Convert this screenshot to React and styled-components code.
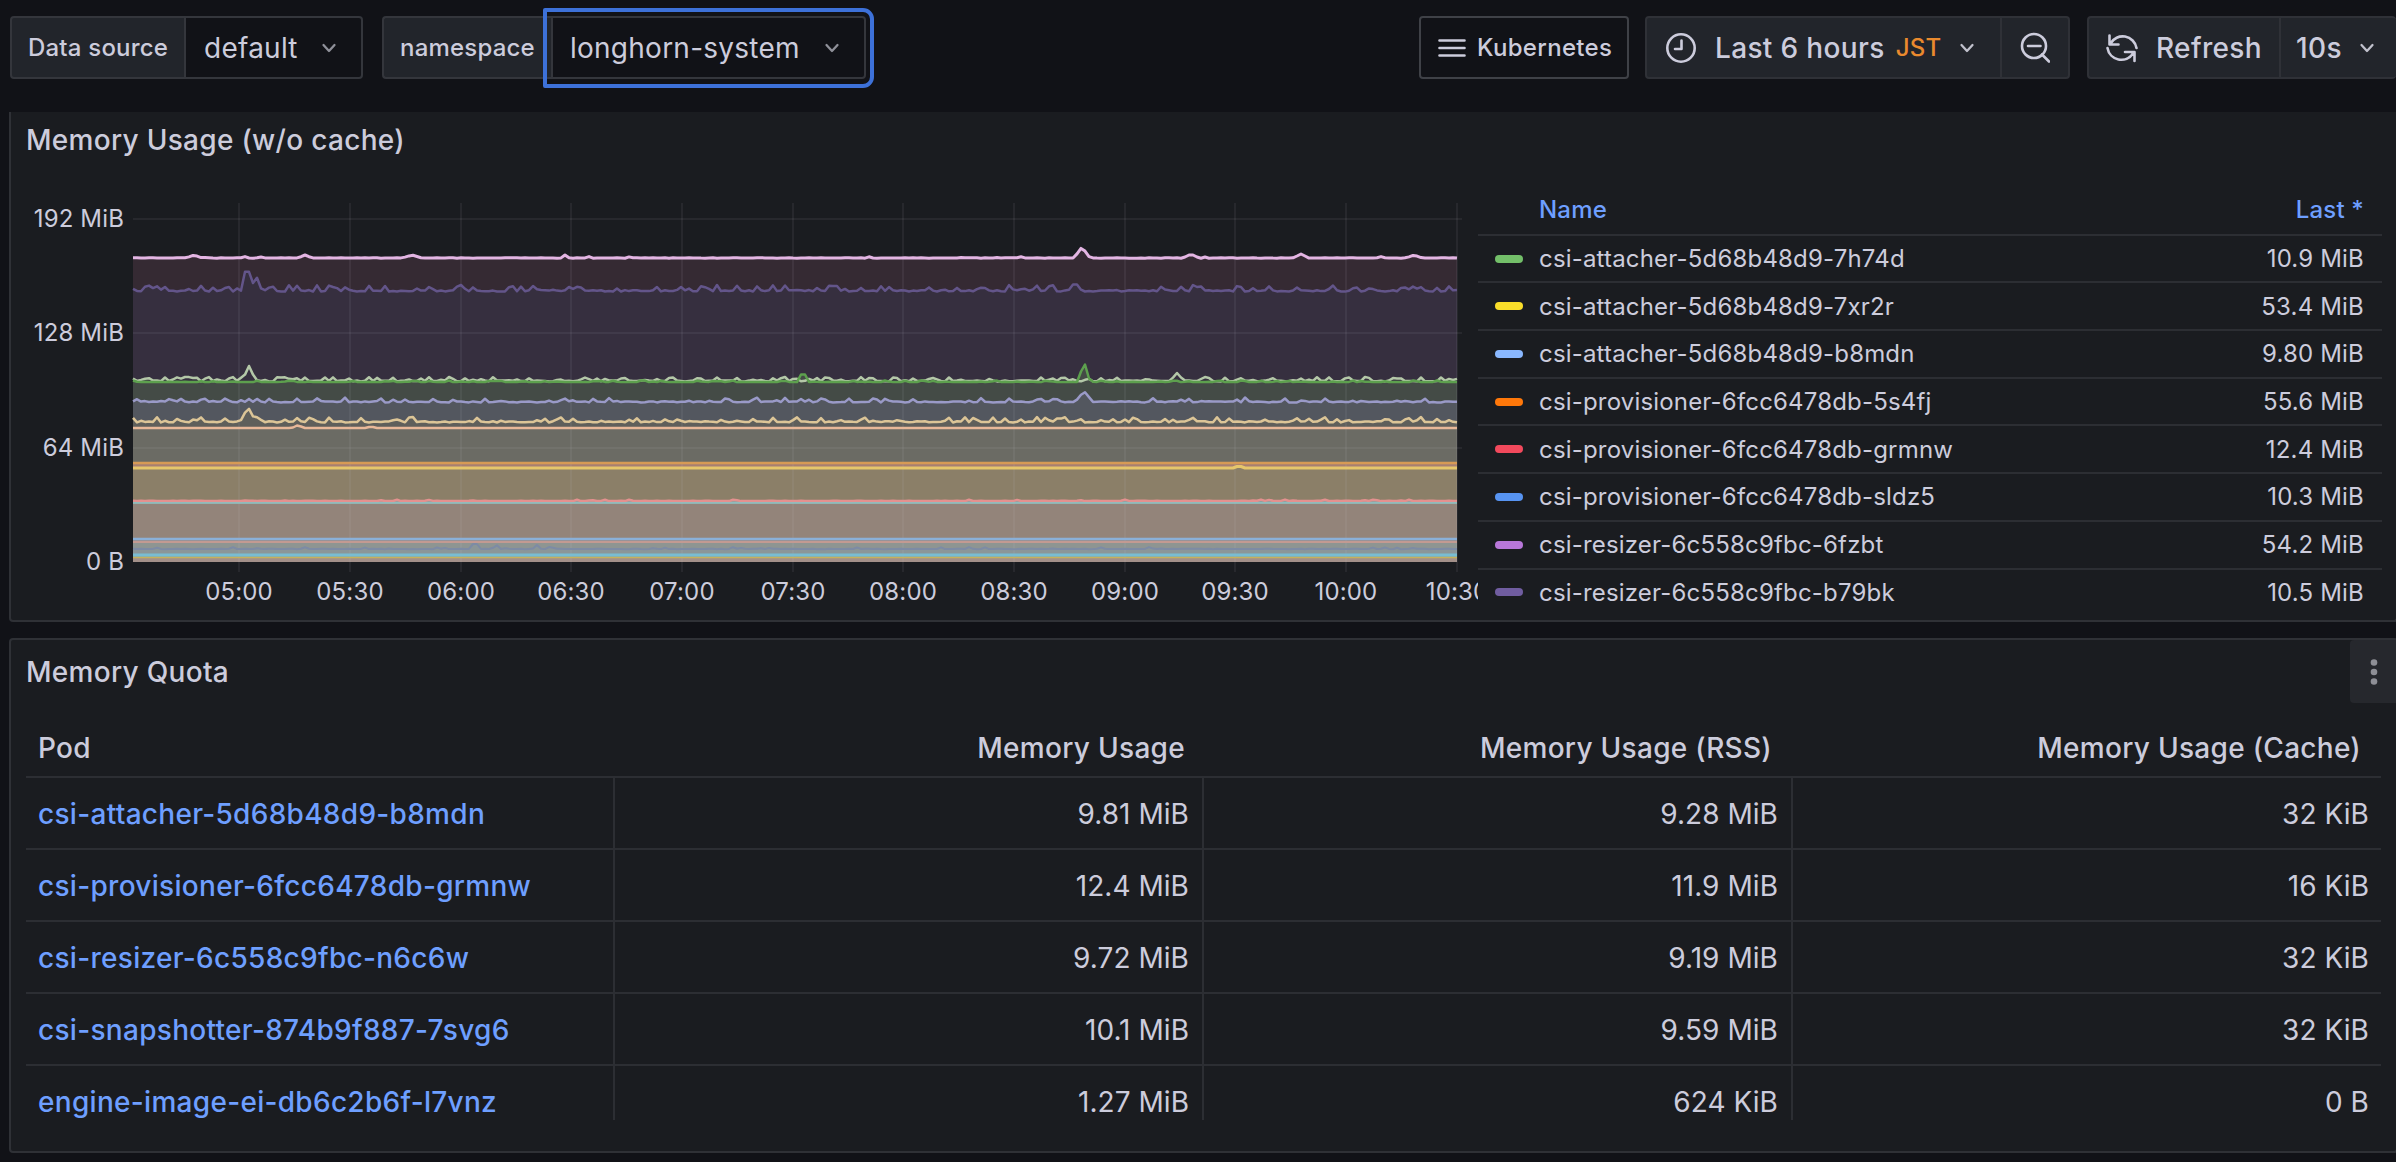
import React, { useMemo } from 'react';
import styled, { createGlobalStyle } from 'styled-components';

const Global = createGlobalStyle`
  html, body { margin: 0; padding: 0; background: #111217; }
  body { font-family: Inter, "Noto Sans", sans-serif; color: #ccccdc; -webkit-font-smoothing: antialiased; }
  * { box-sizing: border-box; }
`;

const Page = styled.div`
  width: 2396px;
  height: 1162px;
  overflow: hidden;
  background: #111217;
`;

const Toolbar = styled.div`
  display: flex;
  align-items: stretch;
  height: 63px;
  margin-top: 16px;
  padding-left: 10px;
`;

const Spacer = styled.div`
  flex: 1;
`;

const Group = styled.div`
  display: flex;
  align-items: stretch;
  margin-right: ${(p) => p.$mr || 0}px;
`;

const Label = styled.label`
  display: flex;
  align-items: center;
  width: ${(p) => p.$w}px;
  padding-left: 16px;
  background: #22252b;
  border: 2px solid #34363c;
  border-right: ${(p) => (p.$noDivider ? 'none' : '2px solid #34363c')};
  border-radius: 4px 0 0 4px;
  font-size: 24px;
  font-weight: 500;
  letter-spacing: 0.2px;
  color: #ccccdc;
  white-space: nowrap;
`;

const Select = styled.div`
  position: relative;
  display: flex;
  align-items: center;
  justify-content: space-between;
  width: ${(p) => p.$w}px;
  padding: 0 ${(p) => p.$pr}px 0 ${(p) => p.$pl}px;
  background: #111217;
  border: 2px solid #34363c;
  border-left: ${(p) => (p.$focus ? '2px solid #34363c' : 'none')};
  border-radius: 0 4px 4px 0;
  font-size: 28px;
  letter-spacing: 0.25px;
  color: #ccccdc;
  white-space: nowrap;
`;

const FocusRing = styled.div`
  position: absolute;
  top: -10px;
  bottom: -11px;
  left: -10px;
  right: -10px;
  border: 4px solid #3d71d9;
  border-radius: 2px 11px 11px 2px;
  pointer-events: none;
`;

const Chevron = styled.svg`
  display: block;
  width: 20px;
  height: 20px;
  flex: none;
  color: ${(p) => (p.$dim ? '#8f9099' : '#c0c1cc')};
`;

const OutlineButton = styled.button`
  display: flex;
  align-items: center;
  gap: 11px;
  width: 210px;
  padding: 0 0 0 17px;
  margin-right: 16px;
  background: #111217;
  border: 2px solid #3f4147;
  border-radius: 4px;
  color: #ccccdc;
  font: 500 24px Inter, sans-serif;
  letter-spacing: 0.3px;
`;

const ButtonGroup = styled.div`
  display: flex;
  align-items: stretch;
  margin-right: ${(p) => p.$mr || 0}px;
  background: #22252b;
  border: 2px solid #2f3137;
  border-right: ${(p) => (p.$open ? 'none' : '2px solid #2f3137')};
  border-radius: 4px;
`;

const GroupButton = styled.div`
  display: flex;
  align-items: center;
  width: ${(p) => p.$w}px;
  padding-left: ${(p) => p.$pl}px;
  border-left: ${(p) => (p.$divider ? '2px solid #2f3137' : 'none')};
  font-size: 28px;
  font-weight: 500;
  letter-spacing: 0.35px;
  color: #ccccdc;
  white-space: nowrap;
`;

const ButtonText = styled.span`
  margin-left: ${(p) => p.$ml}px;
`;

const ChevronSlot = styled.span`
  display: flex;
  margin-left: ${(p) => p.$ml}px;
`;

const ToolIcon = styled.svg`
  width: 32px;
  height: 32px;
  flex: none;
  color: #ccccdc;
`;

const MenuIcon = styled.svg`
  width: 28px;
  height: 28px;
  flex: none;
  color: #ccccdc;
`;

const Zone = styled.span`
  margin-left: 11px;
  font-size: 24px;
  letter-spacing: 0.3px;
  color: #ea8a2e;
`;

const Main = styled.div`
  padding-left: 9px;
  margin-right: -2px;
  margin-top: 33px;
`;

const PanelBox = styled.section`
  position: relative;
  height: ${(p) => p.$h}px;
  margin-bottom: 16px;
  background: #1a1c20;
  border: 2px solid #2f3136;
  border-top: ${(p) => (p.$clipped ? 'none' : '2px solid #2f3136')};
  border-radius: ${(p) => (p.$clipped ? '0 0 4px 4px' : '4px')};
`;

const Title = styled.h2`
  display: flex;
  align-items: center;
  height: ${(p) => p.$h}px;
  margin: 0;
  padding-left: 15px;
  font-size: 28px;
  font-weight: 500;
  letter-spacing: 0.3px;
  color: #ccccdc;
`;

const ChartRow = styled.div`
  display: flex;
  align-items: flex-start;
  margin-top: 2px;
`;

const ChartSvg = styled.svg`
  display: block;
  flex: none;
  width: 1467px;
  height: 450px;
`;

const AxisText = styled.text`
  font-family: Inter, sans-serif;
  font-size: 24px;
  letter-spacing: 0.15px;
  fill: #ccccdc;
`;

const Legend = styled.div`
  width: 904px;
  margin-top: 16px;
`;

const LegendRow = styled.div`
  display: flex;
  align-items: center;
  height: 47.7px;
  padding: 0 18px 0 17px;
  border-top: ${(p) => (p.$head ? 'none' : '2px solid #2c2e33')};
  font-size: 24px;
  letter-spacing: 0.18px;
  color: ${(p) => (p.$head ? '#6e9fff' : '#ccccdc')};
  font-weight: ${(p) => (p.$head ? 500 : 400)};
`;

const Swatch = styled.i`
  display: block;
  flex: none;
  width: 28px;
  height: 8px;
  margin-right: 16px;
  border-radius: 4px;
  background: ${(p) => p.$c || 'transparent'};
`;

const LegendName = styled.span`
  flex: 1;
`;

const MenuButton = styled.div`
  position: absolute;
  top: 0;
  right: 0;
  display: flex;
  align-items: center;
  justify-content: center;
  width: 46px;
  height: 63px;
  padding-left: 2px;
  background: #26282d;
  border-radius: 4px 0 0 4px;
`;

const Dots = styled.svg`
  width: 10px;
  height: 30px;
  color: #8e8f96;
`;

const Table = styled.div`
  margin: 16px 15px 0 15px;
`;

const TableRow = styled.div`
  display: grid;
  grid-template-columns: repeat(4, 589px);
  height: ${(p) => p.$h}px;
  border-bottom: ${(p) => (p.$last ? 'none' : '2px solid #2c2e33')};
`;

const HeadCell = styled.div`
  display: flex;
  align-items: center;
  justify-content: ${(p) => (p.$first ? 'flex-start' : 'flex-end')};
  padding: 0 ${(p) => (p.$first ? 0 : p.$pr)}px 0 ${(p) => (p.$first ? 12 : 0)}px;
  font-size: 28px;
  font-weight: 500;
  letter-spacing: 0.3px;
  color: #ccccdc;
`;

const Cell = styled.div`
  height: ${(p) => p.$h}px;
  padding: 16px 13px 0 12px;
  line-height: 40px;
  font-size: 28px;
  letter-spacing: 0.05px;
  text-align: ${(p) => (p.$link ? 'left' : 'right')};
  color: #ccccdc;
  border-right: ${(p) => (p.$end ? 'none' : '2px solid #2c2e33')};
  white-space: nowrap;
`;

const PodLink = styled.a`
  color: #6e9fff;
  font-weight: 500;
  letter-spacing: 0.3px;
  text-decoration: none;
`;

/* chart data */
const X0 = 133;
const X1 = 1460;
const BOTTOM = 562;

function rng(seed) {
  let s = seed;
  return () => {
    s = (s * 1664525 + 1013904223) % 4294967296;
    return s / 4294967296;
  };
}

function makeSeries({ seed, y, jitter = 0, rate = 0.3, spikes = [] }) {
  const r = rng(seed);
  const pts = [];
  for (let x = X0; x <= X1; x += 4) {
    let v = y;
    if (jitter && r() < rate) v -= r() * jitter;
    else if (jitter) v += (r() - 0.6) * jitter * 0.25;
    for (const [sx, h, w] of spikes) {
      const d = Math.abs(x - sx);
      if (d < w) v = Math.min(v, y - h * (1 - d / w));
    }
    pts.push([x, v]);
  }
  return pts;
}

const SERIES = [
  { seed: 11, y: 258, jitter: 2, rate: 0.06, line: '#e3b5e3', w: 3, fill: '#352a33',
    spikes: [[194, 3, 8], [305, 3, 7], [412, 3, 10], [565, 3, 4], [1082, 11, 8], [1191, 4, 8], [1301, 4, 8], [1414, 3, 8]] },
  { seed: 23, y: 291, jitter: 6, rate: 0.4, line: '#63558a', w: 2.5, fill: '#362f3f',
    spikes: [[247, 32, 5], [256, 16, 6], [1075, 9, 7]] },
  { seed: 37, y: 381, jitter: 4, rate: 0.42, line: '#b4c8a8', w: 2.5, fill: '#362f3f',
    spikes: [[249, 15, 7], [1177, 8, 7]] },
  { seed: 41, y: 382, jitter: 1.5, rate: 0.3, line: '#5da04e', w: 2.5, fill: '#444b46',
    spikes: [[803, 15, 4], [1084, 21, 6]] },
  { seed: 53, y: 402, jitter: 4.5, rate: 0.25, line: '#9a9ac8', w: 2.5, fill: '#53575f',
    spikes: [[1084, 11, 9]] },
  { seed: 61, y: 422, jitter: 5, rate: 0.35, line: '#dcc597', w: 2.5, fill: '#5f5f5b',
    spikes: [[248, 15, 8]] },
  { seed: 71, y: 428, jitter: 0, line: '#e8b899', w: 2.5, fill: '#6b6b64', spikes: [[298, 3, 6], [371, 2, 4]] },
  { seed: 83, y: 463, jitter: 0, line: '#d79a55', w: 2.5, fill: '#a87f72' },
  { seed: 89, y: 468, jitter: 0, line: '#e6c66b', w: 3, fill: '#8b7f68', spikes: [[1239, 3, 4]] },
  { seed: 97, y: 501, jitter: 1.5, rate: 0.1, line: '#e4918f', w: 2.5, fill: '#8ea19e' },
  { seed: 101, y: 503, jitter: 0, line: '#8fc4c6', w: 1.5, fill: '#93847a' },
  { seed: 103, y: 539, jitter: 0, line: '#8ab0d8', w: 2.5, fill: '#9a8a86' },
  { seed: 107, y: 542, jitter: 0, line: '#c29a92', w: 2, fill: '#8e9592' },
  { seed: 109, y: 549, jitter: 2, rate: 0.12, line: '#7d8ba5', w: 2, fill: '#8b9698',
    spikes: [[475, 10, 4], [496, 5, 4], [537, 4, 4]] },
  { seed: 113, y: 555, jitter: 0, line: '#79bdd2', w: 3, fill: '#7aa9b8' },
  { seed: 127, y: 557.5, jitter: 0, line: '#c5b15c', w: 1.5, fill: '#a39089' },
];

const VGRID = [239, 350, 461, 571, 682, 793, 903, 1014, 1125, 1235, 1346, 1457];
const VLABEL = ['05:00', '05:30', '06:00', '06:30', '07:00', '07:30', '08:00', '08:30', '09:00', '09:30', '10:00', '10:30'];
const HGRID = [
  [219, '192 MiB'],
  [333, '128 MiB'],
  [448, '64 MiB'],
  [562, '0 B'],
];

const LEGEND = [
  ['#73bf69', 'csi-attacher-5d68b48d9-7h74d', '10.9 MiB'],
  ['#fade2a', 'csi-attacher-5d68b48d9-7xr2r', '53.4 MiB'],
  ['#8ab8ff', 'csi-attacher-5d68b48d9-b8mdn', '9.80 MiB'],
  ['#ff780a', 'csi-provisioner-6fcc6478db-5s4fj', '55.6 MiB'],
  ['#f2495c', 'csi-provisioner-6fcc6478db-grmnw', '12.4 MiB'],
  ['#5794f2', 'csi-provisioner-6fcc6478db-sldz5', '10.3 MiB'],
  ['#b877d9', 'csi-resizer-6c558c9fbc-6fzbt', '54.2 MiB'],
  ['#705da0', 'csi-resizer-6c558c9fbc-b79bk', '10.5 MiB'],
];

const PODS = [
  ['csi-attacher-5d68b48d9-b8mdn', '9.81 MiB', '9.28 MiB', '32 KiB'],
  ['csi-provisioner-6fcc6478db-grmnw', '12.4 MiB', '11.9 MiB', '16 KiB'],
  ['csi-resizer-6c558c9fbc-n6c6w', '9.72 MiB', '9.19 MiB', '32 KiB'],
  ['csi-snapshotter-874b9f887-7svg6', '10.1 MiB', '9.59 MiB', '32 KiB'],
  ['engine-image-ei-db6c2b6f-l7vnz', '1.27 MiB', '624 KiB', '0 B'],
];

function Chart() {
  const data = useMemo(() => SERIES.map((s) => ({ ...s, pts: makeSeries(s) })), []);
  const toLine = (pts) => pts.map(([x, y], i) => `${i ? 'L' : 'M'}${x} ${y.toFixed(1)}`).join('');
  const lastX = data[0].pts[data[0].pts.length - 1][0];
  return (
    <ChartSvg viewBox="11 170 1467 450">
      {data.map((s) => (
        <path key={`a${s.seed}`} d={`${toLine(s.pts)}L${lastX} ${BOTTOM}L${X0} ${BOTTOM}Z`} fill={s.fill} />
      ))}
      {HGRID.slice(0, 3).map(([y]) => (
        <line key={y} x1={X0} x2={1462} y1={y} y2={y} stroke="#ccccdc" strokeOpacity="0.1" strokeWidth="1.5" />
      ))}
      {VGRID.map((x) => (
        <line key={x} x1={x} x2={x} y1={203} y2={572} stroke="#ccccdc" strokeOpacity="0.1" strokeWidth="1.5" />
      ))}
      {data.map((s) => (
        <path key={`l${s.seed}`} d={toLine(s.pts)} fill="none" stroke={s.line} strokeWidth={s.w} strokeLinejoin="round" />
      ))}
      {HGRID.map(([y, t]) => (
        <AxisText key={t} x={124} y={y + 8} textAnchor="end">{t}</AxisText>
      ))}
      {VGRID.map((x, i) => (
        <AxisText key={x} x={x} y={600} textAnchor="middle">{VLABEL[i]}</AxisText>
      ))}
    </ChartSvg>
  );
}

const ChevronDown = ({ dim }) => (
  <Chevron $dim={dim} viewBox="0 0 20 20" fill="none" stroke="currentColor" strokeWidth="2.3" strokeLinecap="round" strokeLinejoin="round">
    <path d="M4.500 7l5.500 6 5.500-6" />
  </Chevron>
);

export default function App() {
  return (
    <Page>
      <Global />
      <Toolbar>
        <Group $mr={19}>
          <Label $w={176}>Data source</Label>
          <Select $w={177} $pl={18} $pr={22}>
            default
            <ChevronDown dim />
          </Select>
        </Group>
        <Group>
          <Label $w={169} $noDivider>namespace</Label>
          <Select $w={315} $pl={17} $pr={22} $focus>
            longhorn-system
            <ChevronDown dim />
            <FocusRing />
          </Select>
        </Group>
        <Spacer />
        <OutlineButton>
          <MenuIcon viewBox="0 0 28 28" fill="none" stroke="currentColor" strokeWidth="2.6" strokeLinecap="round">
            <path d="M1.500 6.500h25M1.500 14h25M1.500 21.500h25" />
          </MenuIcon>
          Kubernetes
        </OutlineButton>
        <ButtonGroup $mr={17}>
          <GroupButton $w={353} $pl={18}>
            <ToolIcon viewBox="0 0 32 32" fill="none" stroke="currentColor" strokeWidth="2.6" strokeLinecap="round" strokeLinejoin="round">
              <circle cx="16" cy="16" r="13.700" />
              <path d="M16.500 8.500v8.500h-6.500" />
            </ToolIcon>
            <ButtonText $ml={18}>Last 6 hours</ButtonText>
            <Zone>JST</Zone>
            <ChevronSlot $ml={15}>
              <ChevronDown />
            </ChevronSlot>
          </GroupButton>
          <GroupButton $w={68} $pl={16} $divider>
            <ToolIcon viewBox="0 0 32 32" fill="none" stroke="currentColor" strokeWidth="2.6" strokeLinecap="round">
              <circle cx="16" cy="14" r="12" />
              <path d="M10 14h12.500M24 22.500l7 7" />
            </ToolIcon>
          </GroupButton>
        </ButtonGroup>
        <ButtonGroup $open>
          <GroupButton $w={190} $pl={17}>
            <ToolIcon viewBox="0 0 32 32" fill="none" stroke="currentColor" strokeWidth="2.6" strokeLinecap="round" strokeLinejoin="round">
              <path d="M3.500 3.500v9h9M4.500 11.500A14 14 0 0 1 30.500 16M28.500 29v-9h-9.500M1.500 16A14 14 0 0 0 27 21.500" />
            </ToolIcon>
            <ButtonText $ml={18}>Refresh</ButtonText>
          </GroupButton>
          <GroupButton $w={117} $pl={15} $divider>
            10s
            <ChevronSlot $ml={15}>
              <ChevronDown />
            </ChevronSlot>
          </GroupButton>
        </ButtonGroup>
      </Toolbar>
      <Main>
        <PanelBox $h={510} $clipped>
          <Title $h={56}>Memory Usage (w/o cache)</Title>
          <ChartRow>
            <Chart />
            <Legend>
              <LegendRow $head>
                <Swatch />
                <LegendName>Name</LegendName>
                Last *
              </LegendRow>
              {LEGEND.map(([c, n, v]) => (
                <LegendRow key={n}>
                  <Swatch $c={c} />
                  <LegendName>{n}</LegendName>
                  {v}
                </LegendRow>
              ))}
            </Legend>
          </ChartRow>
        </PanelBox>
        <PanelBox $h={515}>
          <Title $h={64}>Memory Quota</Title>
          <MenuButton>
            <Dots viewBox="0 0 10 30" fill="currentColor">
              <circle cx="5" cy="5.500" r="3.300" />
              <circle cx="5" cy="15" r="3.300" />
              <circle cx="5" cy="24.500" r="3.300" />
            </Dots>
          </MenuButton>
          <Table>
            <TableRow $h={58}>
              <HeadCell $first>Pod</HeadCell>
              <HeadCell $pr={19}>Memory Usage</HeadCell>
              <HeadCell $pr={21}>Memory Usage (RSS)</HeadCell>
              <HeadCell $pr={21}>Memory Usage (Cache)</HeadCell>
            </TableRow>
            {PODS.map((row, i) => {
              const last = i === PODS.length - 1;
              const h = last ? 54 : 72;
              const ch = last ? 54 : 70;
              return (
                <TableRow key={row[0]} $h={h} $last={last}>
                  <Cell $link $h={ch}>
                    <PodLink href="#">{row[0]}</PodLink>
                  </Cell>
                  <Cell $h={ch}>{row[1]}</Cell>
                  <Cell $h={ch}>{row[2]}</Cell>
                  <Cell $end $h={ch}>{row[3]}</Cell>
                </TableRow>
              );
            })}
          </Table>
        </PanelBox>
      </Main>
    </Page>
  );
}
